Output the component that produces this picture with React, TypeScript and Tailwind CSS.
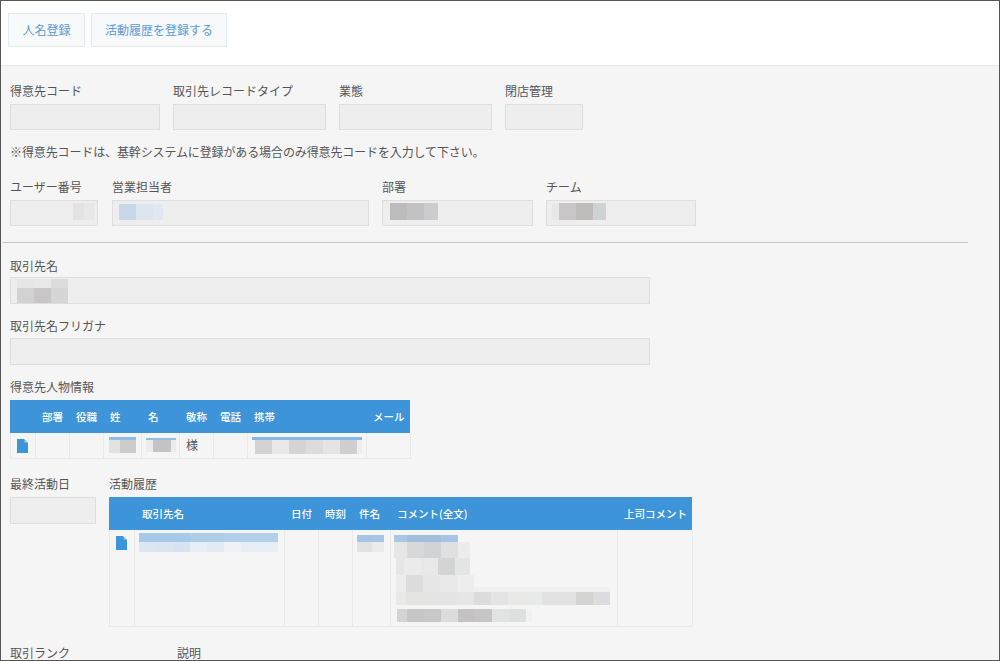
type BlurRow = { h: number; ml?: number; mt?: number; cells: [number, string][] };

// blurred-out values in the screenshot, one entry per mosaic row
function Blur({ rows, className = "" }: { rows: BlurRow[]; className?: string }) {
  return (
    <div className={className}>
      {rows.map((row, i) => (
        <div key={i} className="flex" style={{ height: row.h, marginLeft: row.ml ?? 0, marginTop: row.mt ?? 0 }}>
          {row.cells.map(([w, color], j) => (
            <div key={j} className="h-full shrink-0" style={{ width: w, backgroundColor: color }} />
          ))}
        </div>
      ))}
    </div>
  );
}

function FileIcon() {
  return (
    <svg width="11" height="14" viewBox="0 0 11 14" className="block">
      <path d="M0 0H7L11 4V14H0Z" fill="#3d94d9" />
      <path d="M7.6 0.4L10.6 3.4H7.6Z" fill="#a9cdec" />
    </svg>
  );
}

function Label({ children, className = "" }: { children: React.ReactNode; className?: string }) {
  return <div className={`h-[18px] leading-[18px] text-[12px] text-[#555] whitespace-nowrap ${className}`}>{children}</div>;
}

function Input({ className = "", children }: { className?: string; children?: React.ReactNode }) {
  return <div className={`border border-[#dedede] bg-[#eeeeee] overflow-hidden ${className}`}>{children}</div>;
}

function HeadCell({ children }: { children?: React.ReactNode }) {
  return (
    <div className="pl-[7px] h-full flex items-center text-[10.5px] font-medium text-white whitespace-nowrap">
      {children}
    </div>
  );
}

function Cell({ children, className = "" }: { children?: React.ReactNode; className?: string }) {
  return <div className={`border-r border-b border-[#e9e9e9] ${className}`}>{children}</div>;
}

const contactCols = "grid grid-cols-[25px_34px_34px_38px_38px_34px_34px_119px_44px] w-[400px]";
const activityCols = "grid grid-cols-[25px_150px_34px_34px_38px_227px_75px] w-[583px]";

function ContactTable() {
  return (
    <div>
      <div className={`${contactCols} h-[33px] bg-[#3d94d9]`}>
        <HeadCell />
        <HeadCell>部署</HeadCell>
        <HeadCell>役職</HeadCell>
        <HeadCell>姓</HeadCell>
        <HeadCell>名</HeadCell>
        <HeadCell>敬称</HeadCell>
        <HeadCell>電話</HeadCell>
        <HeadCell>携帯</HeadCell>
        <HeadCell>メール</HeadCell>
      </div>
      <div className={`${contactCols} h-[26px] border-l border-[#e9e9e9]`}>
        <Cell className="pl-[6px] pt-[6px]"><FileIcon /></Cell>
        <Cell />
        <Cell />
        <Cell className="pl-[5px] pt-[4px]">
          <Blur rows={[
            { h: 3, cells: [[27, "#8fbde5"]] },
            { h: 13, cells: [[11, "#e2e2e2"], [16, "#cbcbcb"]] },
          ]} />
        </Cell>
        <Cell className="pl-[4px] pt-[5px]">
          <Blur rows={[
            { h: 2, cells: [[30, "#8fbde5"]] },
            { h: 12, cells: [[7, "#ececec"], [18, "#c4c4c4"], [5, "#ececec"]] },
          ]} />
        </Cell>
        <Cell className="pl-[6px] text-[12px] leading-[24px] text-[#555]">様</Cell>
        <Cell />
        <Cell className="pl-[4px] pt-[4px]">
          <Blur rows={[
            { h: 3, cells: [[110, "#85b8e5"]] },
            { h: 14, ml: 3, cells: [[17, "#d2d2d2"], [17, "#e8e8e8"], [17, "#d4d4d4"], [17, "#dcdcdc"], [17, "#e4e4e4"], [17, "#cfcfcf"], [5, "#eeeeee"]] },
          ]} />
        </Cell>
        <Cell />
      </div>
    </div>
  );
}

function ActivityTable() {
  return (
    <div>
      <div className={`${activityCols} h-[33px] bg-[#3d94d9]`}>
        <HeadCell />
        <div className="pl-px h-full"><HeadCell>取引先名</HeadCell></div>
        <HeadCell>日付</HeadCell>
        <HeadCell>時刻</HeadCell>
        <HeadCell>件名</HeadCell>
        <HeadCell>コメント(全文)</HeadCell>
        <HeadCell>上司コメント</HeadCell>
      </div>
      <div className={`${activityCols} h-[97px] border-l border-[#e9e9e9]`}>
        <Cell className="pl-[6px] pt-[6px]"><FileIcon /></Cell>
        <Cell className="pl-[4px] pt-[3px]">
          <Blur rows={[
            { h: 9, cells: [[51, "#a6c9e8"], [34, "#aecde9"], [54, "#b3d0ea"]] },
            { h: 10, cells: [[17, "#dde7f1"], [17, "#dbe5f0"], [17, "#d8e3ef"], [17, "#e8eef5"], [17, "#e3eaf3"], [17, "#eef2f7"], [37, "#e8eef5"]] },
          ]} />
        </Cell>
        <Cell />
        <Cell />
        <Cell className="pl-[4px] pt-[5px]">
          <Blur rows={[
            { h: 7, cells: [[27, "#a4c5e4"]] },
            { h: 10, cells: [[15, "#e2e2e2"], [12, "#ebebeb"]] },
          ]} />
        </Cell>
        <Cell className="pl-[3px] pt-[5px]">
          <Blur rows={[
            { h: 7, cells: [[13, "#a8c9e6"], [17, "#9fbfdc"], [17, "#9fbfdc"], [17, "#a5c6e4"]] },
            { h: 16, cells: [[13, "#e6e6e4"], [17, "#d8d8d8"], [17, "#d0d2d4"], [17, "#e0e0e0"], [12, "#ececec"]] },
            { h: 17, ml: 2, cells: [[8, "#e6e6e6"], [17, "#ebebeb"], [17, "#e8e8e8"], [17, "#d4d4d4"], [15, "#e4e6e6"]] },
            { h: 12, ml: 2, cells: [[10, "#ececec"], [17, "#dcdcdc"], [17, "#e6e6e6"], [17, "#e8e8e8"], [17, "#ededed"]] },
            { h: 5, ml: 2, cells: [[10, "#ececec"], [17, "#dcdcdc"], [17, "#e6e6e6"], [17, "#e8e8e8"], [17, "#ededed"], [136, "#f1f1f1"]] },
            { h: 13, ml: 2, cells: [[10, "#e8e8e8"], [17, "#e4e4e2"], [17, "#e4e4e4"], [17, "#e4e4e4"], [17, "#e6e6e6"], [17, "#dcdcdc"], [17, "#e4e4e4"], [17, "#e9e9e7"], [17, "#e8eaea"], [17, "#e2e2e2"], [17, "#e2e2e2"], [17, "#d4d4d0"], [17, "#dcdce0"]] },
            { h: 13, ml: 3, mt: 4, cells: [[10, "#d4d4d4"], [17, "#c6c6c6"], [17, "#c8c8c8"], [17, "#dcdcdc"], [17, "#c4c2c2"], [17, "#c6c6c6"], [17, "#e2e4e4"], [17, "#dee0e0"], [6, "#f0f2f2"]] },
          ]} />
        </Cell>
        <Cell />
      </div>
    </div>
  );
}

export default function App() {
  return (
    <div className="w-[1000px] h-[661px] border border-[#555] overflow-hidden bg-[#f5f5f5] font-['Noto_Sans_CJK_JP',sans-serif]">
      <div className="h-[65px] bg-white border-b border-[#e6e6e6] flex gap-[6px] pl-[7px] pt-[12px]">
        <button className="h-[34px] w-[77px] border border-[#e6ebef] bg-[#f7f9fb] text-[12px] text-[#5b9bd8]">人名登録</button>
        <button className="h-[34px] w-[136px] border border-[#e6ebef] bg-[#f7f9fb] text-[12px] text-[#5b9bd8]">活動履歴を登録する</button>
      </div>

      <div className="pl-[9px] pt-[16px]">
        <div className="flex gap-[13px]">
          <div className="w-[150px]"><Label className="mb-[4px]">得意先コード</Label><Input className="h-[26px]" /></div>
          <div className="w-[153px]"><Label className="mb-[4px]">取引先レコードタイプ</Label><Input className="h-[26px]" /></div>
          <div className="w-[153px]"><Label className="mb-[4px]">業態</Label><Input className="h-[26px]" /></div>
          <div className="w-[78px]"><Label className="mb-[4px]">閉店管理</Label><Input className="h-[26px]" /></div>
        </div>

        <Label className="mt-[13px] tracking-[-0.12px]">※得意先コードは、基幹システムに登録がある場合のみ得意先コードを入力して下さい。</Label>

        <div className="flex mt-[17px]">
          <div className="w-[88px] mr-[14px]">
            <Label className="mb-[4px]">ユーザー番号</Label>
            <Input className="h-[26px] pl-[62px] pt-[2px]">
              <Blur rows={[{ h: 17, cells: [[11, "#e3e3e1"], [11, "#e8e8e8"]] }]} />
            </Input>
          </div>
          <div className="w-[257px] mr-[13px]">
            <Label className="mb-[4px]">営業担当者</Label>
            <Input className="h-[26px] pl-[6px] pt-[3px]">
              <Blur rows={[{ h: 16, cells: [[17, "#c8d8ea"], [17, "#dce6f0"], [10, "#e0e8f2"]] }]} />
            </Input>
          </div>
          <div className="w-[151px] mr-[13px]">
            <Label className="mb-[4px]">部署</Label>
            <Input className="h-[26px] pl-[7px] pt-[2px]">
              <Blur rows={[{ h: 17, cells: [[17, "#bcbcbc"], [17, "#c2c2c2"], [14, "#ccccce"]] }]} />
            </Input>
          </div>
          <div className="w-[150px]">
            <Label className="mb-[4px]">チーム</Label>
            <Input className="h-[26px] pl-[5px] pt-[2px]">
              <Blur rows={[{ h: 17, cells: [[7, "#e8e8e8"], [17, "#c8c6c6"], [17, "#bebcba"], [13, "#ced2d2"]] }]} />
            </Input>
          </div>
        </div>

        <div className="h-px w-[965px] -ml-[7px] mt-[16px] bg-[#c4c4c4]" />

        <Label className="mt-[14px] mb-[2px]">取引先名</Label>
        <Input className="h-[27px] w-[640px] pl-[6px] pt-px">
          <Blur rows={[
            { h: 9, cells: [[17, "#e6e6e6"], [17, "#e8e8e8"], [17, "#dcdcdc"]] },
            { h: 15, cells: [[17, "#d2d2d2"], [17, "#c8c6c6"], [17, "#d6d6d6"]] },
          ]} />
        </Input>

        <Label className="mt-[13px] mb-[3px]">取引先名フリガナ</Label>
        <Input className="h-[27px] w-[640px]" />

        <Label className="mt-[13px] mb-[4px]">得意先人物情報</Label>
        <ContactTable />

        <div className="flex mt-[16px]">
          <div className="w-[99px]">
            <Label className="mb-[4px]">最終活動日</Label>
            <Input className="h-[27px] w-[86px]" />
          </div>
          <div>
            <Label className="mb-[4px]">活動履歴</Label>
            <ActivityTable />
          </div>
        </div>

        <div className="flex mt-[17px]">
          <Label className="w-[167px]">取引ランク</Label>
          <Label>説明</Label>
        </div>
      </div>
    </div>
  );
}
